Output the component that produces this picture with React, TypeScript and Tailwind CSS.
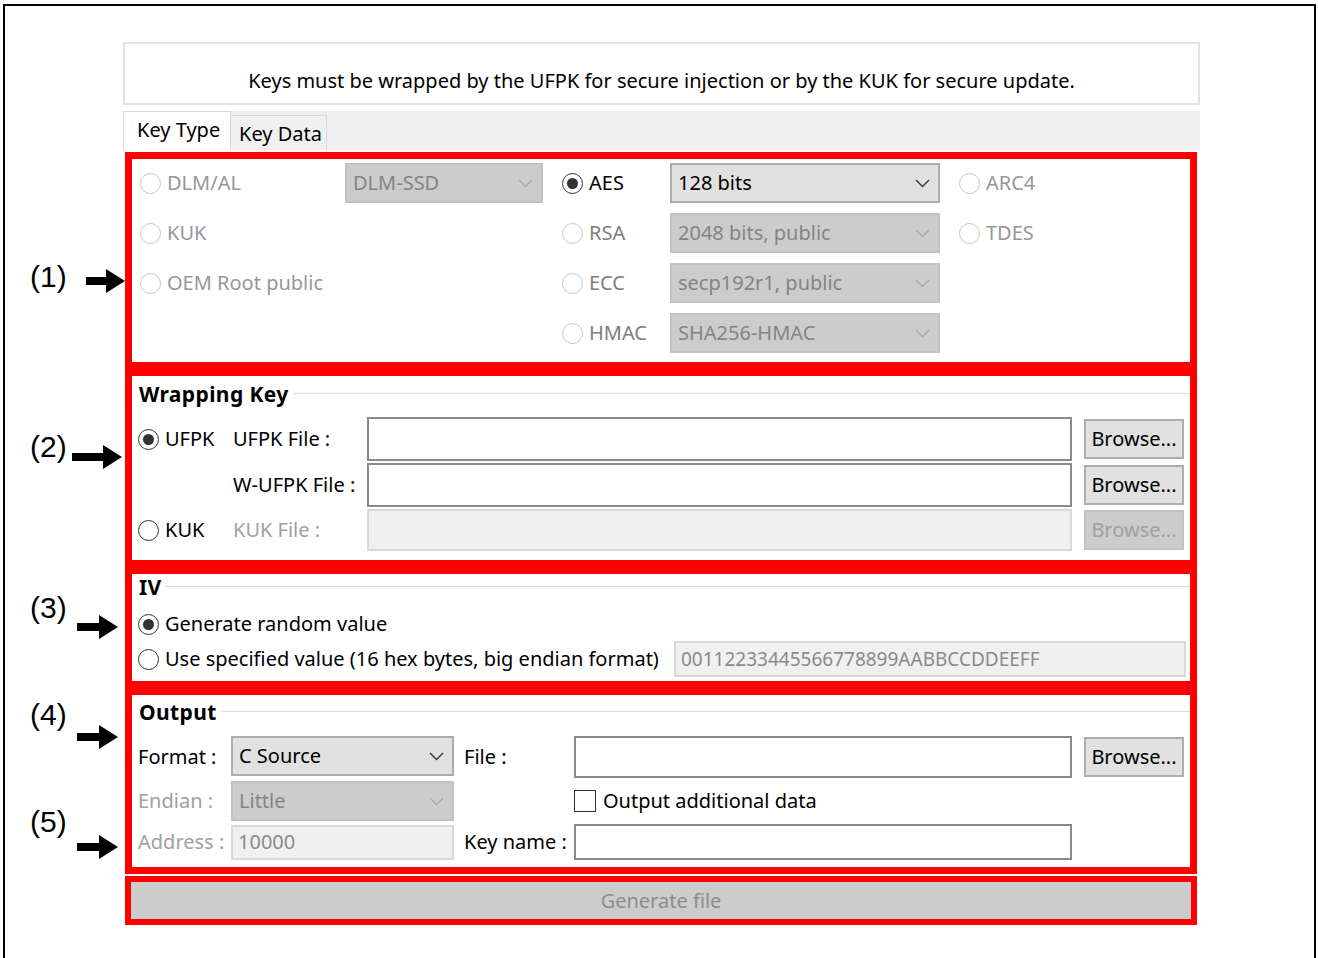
import React from 'react';

type Tone = 'normal' | 'muted' | 'faint';

const toneText: Record<Tone, string> = {
  normal: 'text-black',
  muted: 'text-[#7d7d7d]',
  faint: 'text-[#979797]',
};

function Radio({ checked, disabled }: { checked?: boolean; disabled?: boolean }) {
  return (
    <span
      className={`flex h-[21px] w-[21px] shrink-0 items-center justify-center rounded-full border-[1.5px] bg-white ${
        disabled ? 'border-[#c6c6c6]' : 'border-[#333333]'
      }`}
    >
      {checked && <span className="h-[11px] w-[11px] rounded-full bg-[#333333]" />}
    </span>
  );
}

function RadioLabel({
  label,
  checked,
  disabled,
  tone = 'normal',
  className = '',
}: {
  label: string;
  checked?: boolean;
  disabled?: boolean;
  tone?: Tone;
  className?: string;
}) {
  return (
    <label className={`flex items-center gap-[6px] whitespace-nowrap ${toneText[tone]} ${className}`}>
      <Radio checked={checked} disabled={disabled} />
      <span>{label}</span>
    </label>
  );
}

function Chevron({ disabled }: { disabled?: boolean }) {
  return (
    <svg width="15" height="9" viewBox="0 0 15 9" className="shrink-0">
      <polyline
        points="1,1 7.5,7.5 14,1"
        fill="none"
        stroke={disabled ? '#a9a9a9' : '#333333'}
        strokeWidth="1.4"
      />
    </svg>
  );
}

function Combo({ value, disabled, className = '' }: { value: string; disabled?: boolean; className?: string }) {
  return (
    <div
      className={`flex h-[40px] items-center justify-between border-2 pl-[6px] pr-[8px] ${
        disabled ? 'border-[#c2c2c2] bg-[#cccccc] text-[#848484]' : 'border-[#adadad] bg-[#e1e1e1] text-black'
      } ${className}`}
    >
      <span className="whitespace-nowrap">{value}</span>
      <Chevron disabled={disabled} />
    </div>
  );
}

function Input({ value, disabled, className = '' }: { value?: string; disabled?: boolean; className?: string }) {
  return (
    <div
      className={`flex items-center border-2 pl-[5px] ${
        disabled ? 'border-[#d9d9d9] bg-[#f0f0f0] text-[#8a8a8a]' : 'border-[#8a8a8a] bg-white text-black'
      } ${className}`}
    >
      {value}
    </div>
  );
}

function Button({ disabled, className = '' }: { disabled?: boolean; className?: string }) {
  return (
    <button
      className={`flex h-[40px] w-[100px] items-center justify-center border-2 ${
        disabled ? 'border-[#c2c2c2] bg-[#cccccc] text-[#a0a0a0]' : 'border-[#adadad] bg-[#e1e1e1] text-black'
      } ${className}`}
    >
      Browse...
    </button>
  );
}

function GroupTitle({ title, className = '' }: { title: string; className?: string }) {
  return (
    <div className={`flex h-[28px] items-center pl-[7px] ${className}`}>
      <span className="text-[21px] font-bold tracking-[0.4px]">{title}</span>
      <span className="ml-[4px] mb-[4px] h-px flex-1 bg-[#dcdcdc]" />
    </div>
  );
}

function Arrow({ w }: { w: number }) {
  return (
    <svg width={w} height="24" viewBox={`0 0 ${w} 24`}>
      <path d={`M0 8 H${w - 19} V0 L${w} 12 L${w - 19} 24 V16 H0 Z`} fill="black" />
    </svg>
  );
}

function Callout({ n, labelTop, arrowTop, arrowLeft, arrowW }: {
  n: number;
  labelTop: number;
  arrowTop: number;
  arrowLeft: number;
  arrowW: number;
}) {
  return (
    <>
      <span
        className="absolute left-[-102px] font-['Liberation_Sans',Arial,sans-serif] text-[30px] leading-[34px] text-black"
        style={{ top: labelTop }}
      >
        ({n})
      </span>
      <span className="absolute flex" style={{ top: arrowTop, left: arrowLeft }}>
        <Arrow w={arrowW} />
      </span>
    </>
  );
}

function KeyTypeSection() {
  return (
    <section className="relative h-[217px] border-[7px] border-[#ff0000]">
      <Callout n={1} labelTop={101} arrowTop={110} arrowLeft={-46} arrowW={39} />
      <div className="grid grid-cols-[205px_198px_127px_270px_1fr] grid-rows-[repeat(4,40px)] gap-y-[10px] pl-[8px] pt-[4px]">
        <RadioLabel label="DLM/AL" disabled tone="faint" />
        <Combo value="DLM-SSD" disabled />
        <RadioLabel className="pl-[19px]" label="AES" checked />
        <Combo value="128 bits" />
        <RadioLabel className="pl-[19px]" label="ARC4" disabled tone="faint" />

        <RadioLabel label="KUK" disabled tone="faint" />
        <div />
        <RadioLabel className="pl-[19px]" label="RSA" disabled tone="muted" />
        <Combo value="2048 bits, public" disabled />
        <RadioLabel className="pl-[19px]" label="TDES" disabled tone="faint" />

        <RadioLabel label="OEM Root public" disabled tone="faint" />
        <div />
        <RadioLabel className="pl-[19px]" label="ECC" disabled tone="muted" />
        <Combo value="secp192r1, public" disabled />
        <div />

        <div />
        <div />
        <RadioLabel className="pl-[19px]" label="HMAC" disabled tone="muted" />
        <Combo value="SHA256-HMAC" disabled />
        <div />
      </div>
    </section>
  );
}

function WrappingKeySection() {
  return (
    <section className="relative h-[198px] border-[7px] border-[#ff0000]">
      <Callout n={2} labelTop={54} arrowTop={69} arrowLeft={-60} arrowW={50} />
      <GroupTitle title="Wrapping Key" className="mt-[5px]" />
      <div className="mt-[8px] grid grid-cols-[95px_134px_705px_112px] grid-rows-[44px_44px_42px] items-center gap-y-[2px] pl-[6px]">
        <RadioLabel label="UFPK" checked />
        <span>UFPK File :</span>
        <Input className="h-[44px]" />
        <Button className="justify-self-end" />

        <div />
        <span className="whitespace-nowrap">W-UFPK File :</span>
        <Input className="h-[44px]" />
        <Button className="justify-self-end" />

        <RadioLabel label="KUK" />
        <span className="text-[#a0a0a0]">KUK File :</span>
        <Input className="h-[42px]" disabled />
        <Button className="justify-self-end" disabled />
      </div>
    </section>
  );
}

function IvSection() {
  return (
    <section className="relative h-[121px] border-[7px] border-[#ff0000]">
      <Callout n={3} labelTop={17} arrowTop={41} arrowLeft={-55} arrowW={41} />
      <GroupTitle title="IV" />
      <div className="mt-[5px] pl-[6px]">
        <div className="flex h-[34px] items-center">
          <RadioLabel label="Generate random value" checked />
        </div>
        <div className="flex h-[36px] items-center">
          <RadioLabel label="Use specified value (16 hex bytes, big endian format)" />
          <Input
            className="ml-auto mr-[4px] h-[36px] w-[512px] text-[19px]"
            value="00112233445566778899AABBCCDDEEFF"
            disabled
          />
        </div>
      </div>
    </section>
  );
}

function OutputSection() {
  return (
    <section className="relative h-[186px] border-[7px] border-[#ff0000]">
      <Callout n={4} labelTop={3} arrowTop={30} arrowLeft={-55} arrowW={41} />
      <Callout n={5} labelTop={110} arrowTop={140} arrowLeft={-55} arrowW={41} />
      <GroupTitle title="Output" className="mt-[4px]" />
      <div className="mt-[9px] grid grid-cols-[93px_223px_120px_498px_112px] grid-rows-[42px_40px_36px] items-center gap-y-[3px] pl-[6px]">
        <span className="whitespace-nowrap">Format :</span>
        <Combo value="C Source" className="self-start" />
        <span className="pl-[10px]">File :</span>
        <Input className="h-[42px]" />
        <Button className="justify-self-end" />

        <span className="whitespace-nowrap text-[#a0a0a0]">Endian :</span>
        <Combo value="Little" disabled />
        <div />
        <label className="flex items-center gap-[7px] whitespace-nowrap">
          <span className="h-[22px] w-[22px] shrink-0 border-[1.5px] border-[#333333] bg-white" />
          <span>Output additional data</span>
        </label>
        <div />

        <span className="whitespace-nowrap text-[#a0a0a0]">Address :</span>
        <Input className="h-[35px]" value="10000" disabled />
        <span className="whitespace-nowrap pl-[10px]">Key name :</span>
        <Input className="h-[36px]" />
        <div />
      </div>
    </section>
  );
}

export default function App() {
  return (
    <div className="min-h-screen bg-white pl-[3px] pt-[4px] font-['Noto_Sans',sans-serif] text-[20px] text-black">
      <div className="h-[954px] w-[1313px] border-x-2 border-t-2 border-black pl-[118px] pt-[36px]">
        <div className="w-[1077px]">
          <div className="flex h-[63px] items-center justify-center border-2 border-[#e3e3e3] pt-[14px] leading-[26px]">
            Keys must be wrapped by the UFPK for secure injection or by the KUK for secure update.
          </div>

          <div className="mt-[6px] flex h-[39px] items-end bg-[#f0f0f0]">
            <div className="flex h-[39px] w-[108px] items-center border border-b-0 border-[#d9d9d9] bg-white pl-[13px] pb-[2px]">
              Key Type
            </div>
            <div className="flex h-[35px] w-[96px] items-center border border-l-0 border-b-0 border-[#d9d9d9] bg-[#f0f0f0] pl-[8px] pt-[1px]">
              Key Data
            </div>
          </div>

          <div className="pl-[2px] pt-[2px]">
            <div className="w-[1072px]">
              <KeyTypeSection />
              <WrappingKeySection />
              <IvSection />
              <OutputSection />
              <div className="mt-[2px] h-[49px] border-[6px] border-[#ff0000]">
                <div className="flex h-full items-center justify-center bg-[#cccccc] text-[#8c8c8c]">
                  Generate file
                </div>
              </div>
            </div>
          </div>
        </div>
      </div>
    </div>
  );
}
